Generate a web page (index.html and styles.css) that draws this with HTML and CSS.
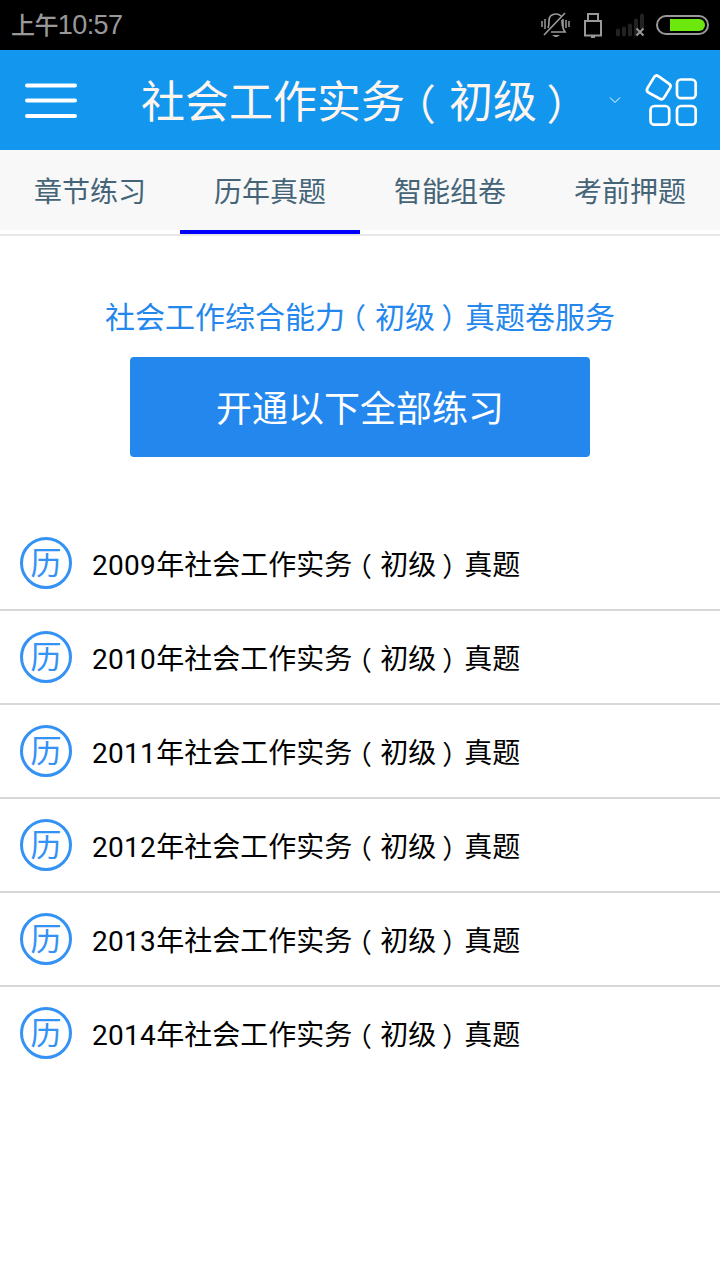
FILE: index.html
```html
<!DOCTYPE html>
<html lang="zh-CN">
<head>
    <meta charset="UTF-8">
    <title>社会工作实务（初级）</title>
    <meta name="viewport" content="width=device-width, initial-scale=1.0">
    <link rel="stylesheet" href="styles.css">
</head>
<body>
    <div class="status-bar">
        <div class="time"><span class="ampm">上午</span>10:57</div>
        <svg class="status-icons" width="180" height="50" viewBox="0 0 180 50" fill="none" stroke="#999" stroke-width="2">
            <!-- 静音 -->
            <path d="M2 21v6M5 19v10M29 21v6M26 20v8M23 19v8" stroke-width="1.5"/>
            <path d="M8 28c1-2 1-4 1-7 0-5 2-7 7-7 2 0 4 1 5 2M11 32h14c-2-3-3-6-3-12M4 35L25 13" stroke-width="1.7"/>
            <path d="M12 35h8l-3 2h-2z" fill="#999" stroke="none"/>
            <!-- USB -->
            <path d="M45 21h16v14.500h-16zM48 20v-6h10v6"/>
            <path d="M51 37h4"/>
            <!-- 信号 -->
            <path d="M78 30.500v4M84 28.500v6M90 25.500v9M96 20.500v14M102 15.500v12" stroke="#222" stroke-width="4" stroke-linecap="round"/>
            <path d="M96.500 28.500l7 7M103.500 28.500l-7 7"/>
            <!-- 电池 -->
            <rect x="117" y="16" width="51" height="18" rx="9"/>
            <path d="M130 19h29a6 6 0 0 1 0 12h-29z" fill="#6ce80f" stroke="none"/>
        </svg>
    </div>
    <div class="header">
        <svg class="menu" width="54" height="38" viewBox="0 0 54 38" stroke="#fff" stroke-width="4" stroke-linecap="round">
            <path d="M3 4.500h48M3 19.500h48M3 35h48"/>
        </svg>
        <h1 class="title">社会工作实务<span class="paren">（</span>初级<span class="paren paren-r">）</span></h1>
        <svg class="arrow" width="12" height="8" viewBox="0 0 12 8" fill="none" stroke="#fff" stroke-width="1">
            <path d="M1 1.500l5 5 5-5"/>
        </svg>
        <svg class="grid" width="56" height="56" viewBox="0 0 56 56" fill="none" stroke="#fff" stroke-width="2.700">
            <path d="M10.500 4.600q1.800-2 3.800-.4l10.600 7.500q2.600 1.800 1.200 4.200l-6 9.700q-1.500 2.500-4.300 1.200l-11-6q-2.900-1.600-1.500-4.500z"/>
            <rect x="33" y="7.500" width="18.700" height="18.700" rx="4"/>
            <rect x="6.500" y="34" width="18.700" height="18.700" rx="4"/>
            <rect x="33" y="34" width="18.700" height="18.700" rx="4"/>
        </svg>
    </div>
    <div class="tabs">
        <div class="tab">章节练习</div>
        <div class="tab active">历年真题</div>
        <div class="tab">智能组卷</div>
        <div class="tab">考前押题</div>
    </div>
    <div class="service">
        <p class="service-name">社会工作综合能力<span class="paren">（</span>初级<span class="paren paren-r">）</span>真题卷服务</p>
        <button class="open-btn">开通以下全部练习</button>
    </div>
    <ul class="list">
        <li class="item"><span class="badge">历</span><div class="item-text"><span class="year">2009</span>年社会工作实务<span class="paren">（</span>初级<span class="paren paren-r">）</span>真题</div></li>
        <li class="item"><span class="badge">历</span><div class="item-text"><span class="year">2010</span>年社会工作实务<span class="paren">（</span>初级<span class="paren paren-r">）</span>真题</div></li>
        <li class="item"><span class="badge">历</span><div class="item-text"><span class="year">2011</span>年社会工作实务<span class="paren">（</span>初级<span class="paren paren-r">）</span>真题</div></li>
        <li class="item"><span class="badge">历</span><div class="item-text"><span class="year">2012</span>年社会工作实务<span class="paren">（</span>初级<span class="paren paren-r">）</span>真题</div></li>
        <li class="item"><span class="badge">历</span><div class="item-text"><span class="year">2013</span>年社会工作实务<span class="paren">（</span>初级<span class="paren paren-r">）</span>真题</div></li>
        <li class="item"><span class="badge">历</span><div class="item-text"><span class="year">2014</span>年社会工作实务<span class="paren">（</span>初级<span class="paren paren-r">）</span>真题</div></li>
    </ul>
</body>
</html>
```
FILE: styles.css
```css
* {
    box-sizing: border-box;
}
body {
    margin: 0;
    min-height: 100vh;
    background: #fff;
    color: #000;
    font-family: Roboto, "Noto Sans CJK SC", sans-serif;
}
.status-bar {
    display: flex;
    justify-content: space-between;
    height: 50px;
    background: #000;
}
.time {
    padding-left: 11px;
    font: 27px/50px "Liberation Sans", "Noto Sans CJK SC", sans-serif;
    letter-spacing: -0.6px;
    color: #999;
}
.ampm {
    font-size: 24px;
    font-weight: 500;
}
.header {
    display: flex;
    align-items: center;
    height: 100px;
    padding: 0 20px 0 24px;
    background: #1296ee;
}
.title {
    margin: 0 0 0 63px;
    padding-top: 6px;
    font-size: 44px;
    line-height: 94px;
    font-weight: 400;
    color: #fff5ee;
    white-space: nowrap;
}
/* 括号居中 */
.paren {
    display: inline-block;
    width: 1.0526em;
    padding-right: 0.08em;
    font-size: 0.95em;
    line-height: 1;
    vertical-align: -0.05em;
    text-align: center;
    font-feature-settings: "halt";
}
.paren-r {
    padding-right: 0.1em;
}
.arrow {
    margin-left: 28px;
}
.grid {
    margin-left: auto;
}
.tabs {
    display: flex;
    height: 86px;
    border-bottom: 2px solid #e8e8e8;
}
.tab {
    flex: 1;
    height: 84px;
    padding-top: 2px;
    background: #f8f8f8;
    border-bottom: 4px solid #fff;
    font-size: 28px;
    line-height: 82px;
    text-align: center;
    color: #456477;
}
.tab.active {
    border-bottom-color: #00f;
}
.service {
    display: flex;
    flex-direction: column;
    align-items: center;
    padding-top: 61px;
}
.service-name {
    margin: 0;
    height: 60px;
    font-size: 30px;
    line-height: 42px;
    color: #2487ee;
}
.open-btn {
    width: 460px;
    height: 100px;
    padding: 0 0 2px;
    border: none;
    border-radius: 4px;
    background: #2487ee;
    color: #fff;
    font-family: inherit;
    font-size: 36px;
}
.list {
    margin: 60px 0 0;
    padding: 0;
    list-style: none;
}
.item {
    display: flex;
    align-items: center;
    height: 94px;
    padding-left: 20px;
    border-bottom: 2px solid #d8d8d8;
}
.item:last-child {
    border-bottom-color: #fff;
}
.badge {
    width: 52px;
    height: 52px;
    margin-right: 20px;
    border: 3px solid #3492f4;
    border-radius: 50%;
    font-size: 31px;
    line-height: 47px;
    text-align: center;
    color: #3492f4;
}
.item-text {
    padding-top: 5px;
    font-size: 28px;
    line-height: 87px;
}
.year {
    letter-spacing: 0.3px;
}
```
